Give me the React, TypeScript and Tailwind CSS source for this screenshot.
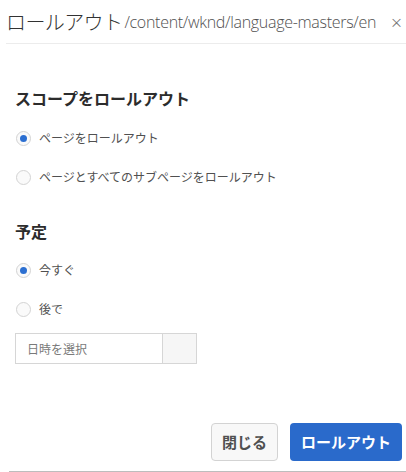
import { useState } from 'react';

const jp = { fontFamily: '"Noto Sans CJK JP", "Noto Sans", sans-serif' };

function Radio({ checked, label, onClick }: { checked: boolean; label: string; onClick: () => void }) {
  return (
    <label className="flex items-center h-[20px] cursor-pointer" onClick={onClick}>
      <span className="w-[15px] h-[15px] rounded-full border border-[#d3d3d3] bg-[#fafafa] flex items-center justify-center ml-[1px]">
        {checked && <span className="w-[7px] h-[7px] rounded-full bg-[#2c6fd1]" />}
      </span>
      <span className="ml-[8px] text-[12px] text-[#505050]">{label}</span>
    </label>
  );
}

export default function App() {
  const [scope, setScope] = useState(0);
  const [when, setWhen] = useState(0);

  return (
    <div className="w-[406px] h-[472px] bg-white overflow-hidden flex flex-col" style={jp}>
      {/* Header */}
      <div className="ml-[6px] h-[44px] flex items-center border-b border-[#ececec]">
        <span className="text-[20px] font-light text-[#323232] tracking-[-0.6px]">ロールアウト</span>
        <span
          className="ml-[2px] text-[16px] font-light text-[#505050] tracking-[-0.3px]"
          style={{ fontFamily: '"Open Sans", sans-serif' }}
        >
          /content/wknd/language-masters/en
        </span>
        <span className="ml-auto mr-[3px] text-[13px] text-[#707070]">×</span>
      </div>

      {/* Body */}
      <div className="px-[15px] flex-1">
        <h2 className="mt-[43px] text-[16px] font-bold text-[#2c2c2c] leading-[22px]">スコープをロールアウト</h2>
        <div className="mt-[19px] flex flex-col gap-[19px]">
          <Radio checked={scope === 0} label="ページをロールアウト" onClick={() => setScope(0)} />
          <Radio checked={scope === 1} label="ページとすべてのサブページをロールアウト" onClick={() => setScope(1)} />
        </div>

        <h2 className="mt-[33px] text-[16px] font-bold text-[#2c2c2c] leading-[22px]">予定</h2>
        <div className="mt-[18px] flex flex-col gap-[19px]">
          <Radio checked={when === 0} label="今すぐ" onClick={() => setWhen(0)} />
          <Radio checked={when === 1} label="後で" onClick={() => setWhen(1)} />
        </div>

        <div className="mt-[14px] w-[182px] h-[31px] flex border border-[#d6d6d6]">
          <div className="flex-1 flex items-center pl-[11px] text-[12px] text-[#7a7a7a]">日時を選択</div>
          <div className="w-[34px] border-l border-[#d6d6d6] bg-[#f6f6f6]" />
        </div>
      </div>

      {/* Footer */}
      <div className="flex justify-end gap-[12px] pr-[4px] pb-[10px]">
        <button className="w-[67px] h-[38px] rounded-[4px] border border-[#d3d3d3] bg-[#f8f8f8] text-[15px] font-bold text-[#505050]">
          閉じる
        </button>
        <button className="w-[112px] h-[38px] rounded-[4px] bg-[#2a6acb] text-[15px] font-bold text-white">
          ロールアウト
        </button>
      </div>
      <div className="ml-[9px] border-t border-[#bdbdbd]" />
    </div>
  );
}
